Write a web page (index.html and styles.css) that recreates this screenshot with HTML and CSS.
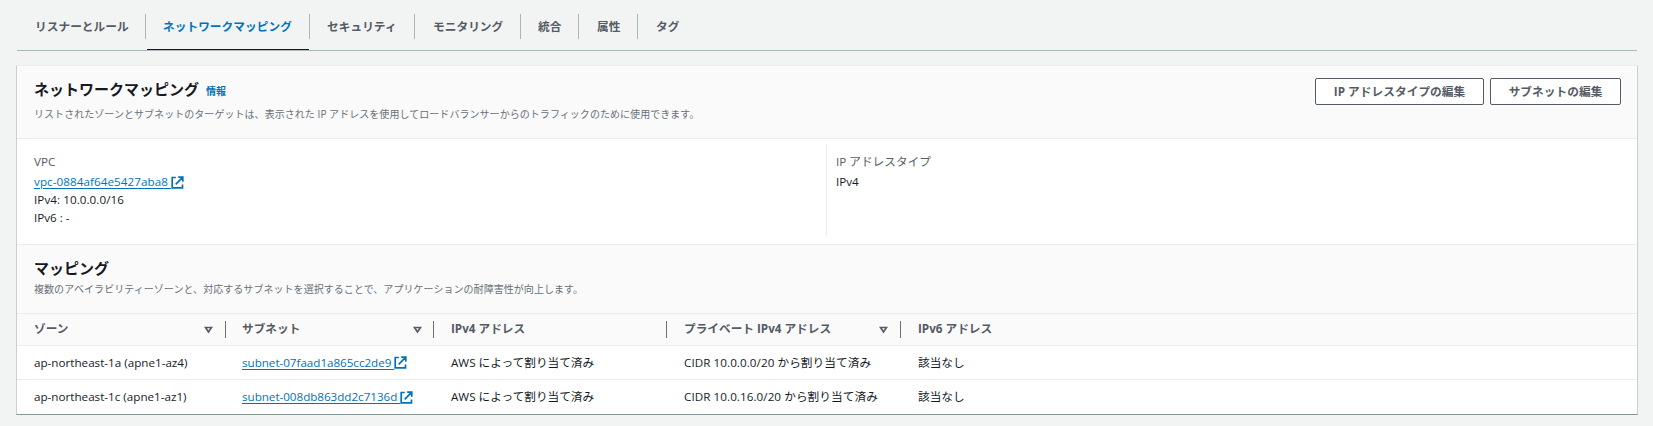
FILE: index.html
```
<!DOCTYPE html>
<html lang="ja">
<head>
<meta charset="utf-8">
<title>ネットワークマッピング</title>
<link rel="stylesheet" href="styles.css">
</head>
<body>
<svg class="defs" width="0" height="0" aria-hidden="true">
  <symbol id="external" viewBox="0 0 13 13"><path d="M4.8 1.5H1.2v10.3h10.3V8.4M7.2 1.2h4.6v4.6M11.8 1.2L4.7 8.3" fill="none" stroke="currentColor" stroke-width="1.7"/></symbol>
  <symbol id="sort" viewBox="0 0 9 8"><path d="M1.5 1.5h6L4.5 6z" fill="none" stroke="currentColor" stroke-width="1.7"/></symbol>
</svg>
<nav class="tabs">
  <a class="tab tab-1">リスナーとルール</a>
  <a class="tab tab-2 active">ネットワークマッピング</a>
  <a class="tab tab-3">セキュリティ</a>
  <a class="tab tab-4">モニタリング</a>
  <a class="tab tab-5">統合</a>
  <a class="tab tab-6">属性</a>
  <a class="tab tab-7">タグ</a>
</nav>
<main class="panel">
  <header class="panel-header">
    <div class="titles">
      <div class="title-line"><h2>ネットワークマッピング</h2><a class="info">情報</a></div>
      <p class="desc">リストされたゾーンとサブネットのターゲットは、表示された IP アドレスを使用してロードバランサーからのトラフィックのために使用できます。</p>
    </div>
    <div class="actions">
      <button class="btn btn-ip">IP アドレスタイプの編集</button>
      <button class="btn btn-subnet">サブネットの編集</button>
    </div>
  </header>
  <section class="details">
    <div class="detail">
      <div class="label">VPC</div>
      <div class="line vpc"><a class="link"><span class="link-text">vpc-0884af64e5427aba8&nbsp;</span><svg class="ext"><use href="#external"/></svg></a></div>
      <div class="line vpc">IPv4: 10.0.0.0/16</div>
      <div class="line">IPv6 : -</div>
    </div>
    <div class="detail detail-type">
      <div class="label">IP アドレスタイプ</div>
      <div class="line">IPv4</div>
    </div>
  </section>
  <header class="map-header">
    <h2>マッピング</h2>
    <p class="desc">複数のアベイラビリティーゾーンと、対応するサブネットを選択することで、アプリケーションの耐障害性が向上します。</p>
  </header>
  <div class="row head">
    <div class="cell"><span>ゾーン</span><svg class="sort"><use href="#sort"/></svg></div>
    <div class="cell"><span>サブネット</span><svg class="sort"><use href="#sort"/></svg></div>
    <div class="cell"><span>IPv4 アドレス</span></div>
    <div class="cell"><span>プライベート IPv4 アドレス</span><svg class="sort"><use href="#sort"/></svg></div>
    <div class="cell"><span>IPv6 アドレス</span></div>
  </div>
  <div class="row">
    <div class="cell">ap-northeast-1a (apne1-az4)</div>
    <div class="cell subnet"><a class="link"><span class="link-text">subnet-07faad1a865cc2de9&nbsp;</span><svg class="ext"><use href="#external"/></svg></a></div>
    <div class="cell">AWS によって割り当て済み</div>
    <div class="cell cidr">CIDR 10.0.0.0/20 から割り当て済み</div>
    <div class="cell">該当なし</div>
  </div>
  <div class="row last">
    <div class="cell">ap-northeast-1c (apne1-az1)</div>
    <div class="cell subnet"><a class="link"><span class="link-text">subnet-008db863dd2c7136d&nbsp;</span><svg class="ext"><use href="#external"/></svg></a></div>
    <div class="cell">AWS によって割り当て済み</div>
    <div class="cell cidr">CIDR 10.0.16.0/20 から割り当て済み</div>
    <div class="cell">該当なし</div>
  </div>
</main>
</body>
</html>
```
FILE: styles.css
```
* { box-sizing: border-box; }
body {
  margin: 0;
  height: 426px;
  overflow: hidden;
  background: #f2f3f3;
  color: #16191f;
  font-family: "Open Sans", "Noto Sans CJK JP", sans-serif;
  font-size: 11.67px;
  line-height: 18px;
}
.defs { display: block; }
h2, p { margin: 0; white-space: nowrap; }
.tabs {
  display: flex;
  margin: 0 16px 0 17px;
  height: 51px;
  padding-top: 14px;
  border-bottom: 1px solid #aab7b8;
}
.tab {
  position: relative;
  height: 25px;
  padding-left: 18px;
  border-right: 1px solid #aab7b8;
  color: #545b64;
  font-weight: 700;
  letter-spacing: 0.06px;
  line-height: 25px;
  white-space: nowrap;
}
.tab-1 { width: 129px; }
.tab-2 { width: 164px; padding-left: 17px; }
.tab-3 { width: 105px; padding-left: 17px; }
.tab-4 { width: 106px; }
.tab-5 { width: 58px; padding-left: 17px; }
.tab-6 { width: 59px; }
.tab-7 { border-right: 0; }
.active { color: #0073bb; }
.active::after {
  content: "";
  position: absolute;
  left: 1px;
  right: 0;
  top: 35px;
  height: 1px;
  background: #16191f;
}
.panel {
  margin: 14px 15px 0 16px;
  height: 350px;
  background: #fff;
  border: 1px solid #c8d0d1;
  border-top-color: #eaeded;
  border-bottom-color: #879596;
}
.panel-header {
  display: flex;
  justify-content: space-between;
  height: 73px;
  padding: 12px 16px 0 17px;
  background: #fafafa;
  border-bottom: 1px solid #eaeded;
}
.title-line { display: flex; align-items: baseline; gap: 7px; height: 26px; }
h2 { font-size: 15px; line-height: 22px; font-weight: 700; }
.info { color: #0073bb; font-size: 10px; font-weight: 700; }
.desc { color: #687078; font-size: 10px; line-height: 20px; letter-spacing: 0.05px; }
.actions { display: flex; gap: 6px; }
.btn {
  height: 27px;
  padding: 0;
  border: 1px solid #545b64;
  border-radius: 2px;
  background: #fff;
  color: #545b64;
  font: inherit;
  font-weight: 700;
  letter-spacing: 0.06px;
  line-height: 24px;
  white-space: nowrap;
}
.btn-ip { width: 169px; }
.btn-subnet { width: 131px; }
.details {
  display: grid;
  grid-template-columns: 809px 1fr;
  height: 106px;
  padding: 5px 0 8px;
  border-bottom: 1px solid #eaeded;
}
.detail { padding: 9px 0 0 17px; }
.detail-type { padding-left: 9px; border-left: 1px solid #eaeded; }
.label { height: 20px; color: #545b64; }
.vpc { letter-spacing: 0.06px; }
.link { display: inline-flex; align-items: center; color: #0073bb; }
.link-text { text-decoration: underline; text-underline-offset: 2px; }
.ext { width: 13px; height: 13px; }
.map-header {
  height: 69px;
  padding: 12px 17px 0;
  background: #fafafa;
  border-bottom: 1px solid #eaeded;
}
.row {
  display: grid;
  grid-template-columns: 209px 208px 233px 234px 1fr;
  height: 34px;
  align-items: center;
  border-bottom: 1px solid #eaeded;
}
.cell {
  display: flex;
  align-items: center;
  height: 17px;
  padding-left: 17px;
  white-space: nowrap;
}
.subnet { padding-left: 16px; letter-spacing: -0.03px; }
.cidr { letter-spacing: 0.06px; }
.head { height: 32px; background: #fafafa; color: #545b64; font-weight: 700; }
.head .cell { border-right: 1px solid #687078; }
.head .cell:last-child { border-right: 0; }
.head span { padding-bottom: 2px; }
.head .cell:nth-child(2) { padding-left: 16px; }
.sort { width: 9px; height: 8px; margin: 1px 12px 0 auto; }
.head .cell:nth-child(2) .sort { margin-right: 11px; }
.last { border-bottom: 0; }
```
